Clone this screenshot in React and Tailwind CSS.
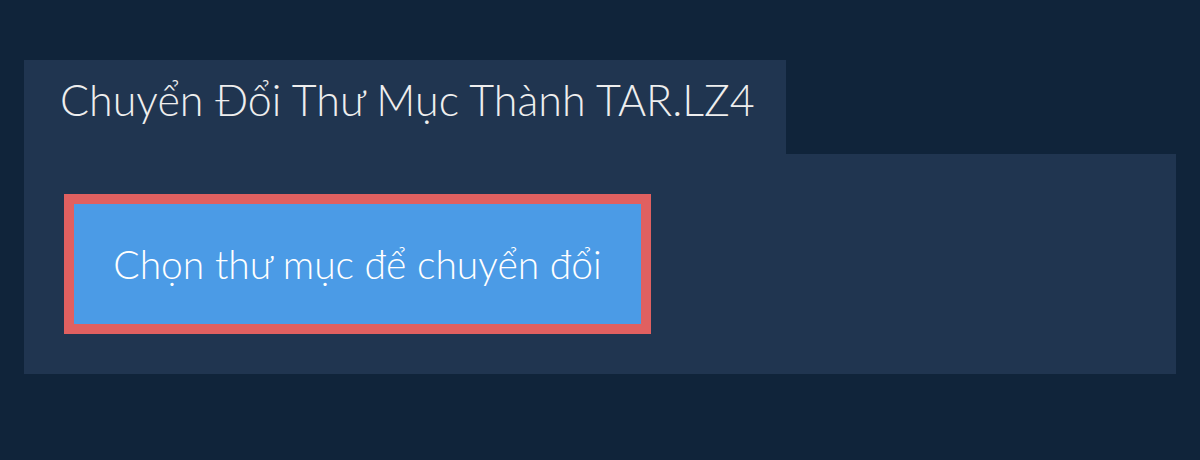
import React from "react";

const App = () => {
  return (
    <div className="w-[1200px] h-[460px] bg-[#10243a] px-6 pt-[60px] font-['Lato',sans-serif]">
      <div className="flex">
        <div className="h-[94px] w-[762px] bg-[#203550] pl-9 pt-[18px]">
          <h1 className="text-[43px] font-light text-[#eeeeee] leading-none whitespace-nowrap">Chuyển Đổi Thư Mục Thành TAR.LZ4</h1>
        </div>
      </div>
      <div className="bg-[#203550] p-10 h-[220px]">
        <button className="w-[587px] h-[140px] bg-[#4b9be6] border-[10px] border-[#e06060] text-white text-[39px] font-light leading-none">
          Chọn thư mục để chuyển đổi
        </button>
      </div>
    </div>
  );
};

export default App;
